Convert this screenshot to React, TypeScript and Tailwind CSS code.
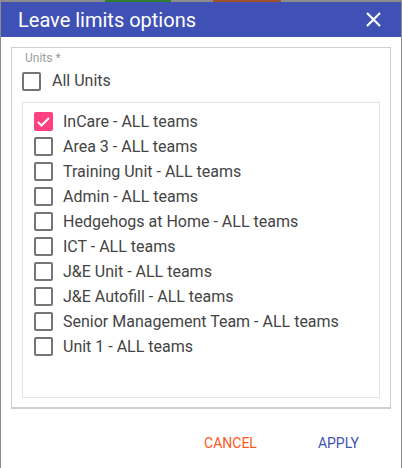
import { useState } from "react";
import clsx from "clsx";

const units = [
  "InCare - ALL teams",
  "Area 3 - ALL teams",
  "Training Unit - ALL teams",
  "Admin - ALL teams",
  "Hedgehogs at Home - ALL teams",
  "ICT - ALL teams",
  "J&E Unit - ALL teams",
  "J&E Autofill - ALL teams",
  "Senior Management Team - ALL teams",
  "Unit 1 - ALL teams",
];

const Box = ({ checked }: { checked: boolean }) => (
  <span
    className={clsx(
      "w-[19px] h-[19px] rounded-[2px] flex items-center justify-center shrink-0",
      checked ? "bg-[#ff4081]" : "border-2 border-[#757575]",
    )}
  >
    {checked && (
      <svg width="13" height="10" viewBox="0 0 13 10" fill="none">
        <path d="M1 5l3.5 3.5L12 1" stroke="white" strokeWidth="2" />
      </svg>
    )}
  </span>
);

export default function App() {
  const [selected, setSelected] = useState<string[]>(["InCare - ALL teams"]);
  const [all, setAll] = useState(false);

  const toggle = (u: string) =>
    setSelected((s) => (s.includes(u) ? s.filter((x) => x !== u) : [...s, u]));

  return (
    <div
      className="w-[402px] h-[468px] overflow-hidden bg-[#8c8c8c] flex flex-col"
      style={{ fontFamily: "Roboto, 'Liberation Sans', sans-serif" }}
    >
      {/* page behind the dialog */}
      <div className="h-[2px] flex shrink-0">
        <div className="w-[105px]" />
        <div className="w-[66px] bg-[#2e7d32]" />
        <div className="w-[42px]" />
        <div className="w-[68px] bg-[#a0522d]" />
      </div>

      <div className="ml-[1px] w-[400px] flex-1 bg-white flex flex-col">
        {/* Header */}
        <div className="h-[35px] bg-[#3f51b5] flex items-center justify-between pl-[17px] pr-[20px]">
          <h2 className="text-[20px] leading-none text-white">Leave limits options</h2>
          <button className="text-white">
            <svg width="15" height="15" viewBox="0 0 15 15">
              <path d="M1 1l13 13M14 1L1 14" stroke="white" strokeWidth="2.2" />
            </svg>
          </button>
        </div>

        {/* Content */}
        <div className="px-[10px] pt-[10px]">
          <div className="border border-[#cfcfcf] border-b-2 pl-[10px] pr-[10px] pb-[9px]">
            <div className="text-[12px] leading-[14px] text-[#9e9e9e] pl-[3px] pt-[3px]">
              Units *
            </div>
            <label
              className="flex items-center gap-[11px] mt-[6px] h-[20px] cursor-pointer"
              onClick={() => setAll(!all)}
            >
              <Box checked={all} />
              <span className="text-[16px] text-[#444]">All Units</span>
            </label>
            <div className="mt-[11px] h-[296px] border border-[#e4e4e4] pl-[11px] pt-[6px]">
              {units.map((u) => (
                <div
                  key={u}
                  onClick={() => toggle(u)}
                  className="h-[25px] flex items-center gap-[10px] cursor-pointer"
                >
                  <Box checked={selected.includes(u)} />
                  <span className="text-[16px] text-[#444] whitespace-nowrap">{u}</span>
                </div>
              ))}
            </div>
          </div>
        </div>

        {/* Footer */}
        <div className="flex justify-end items-center gap-[61px] pr-[42px] pt-[27px] text-[14px] leading-none">
          <button className="text-[#ff5722]">CANCEL</button>
          <button className="text-[#3f51b5]">APPLY</button>
        </div>
      </div>
    </div>
  );
}
